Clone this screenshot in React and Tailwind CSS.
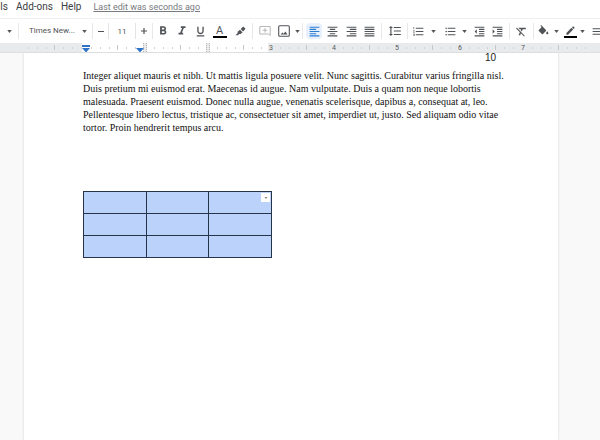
import React from "react";
import {
  MdFormatBold,
  MdFormatItalic,
  MdFormatUnderlined,
  MdFormatAlignLeft,
  MdFormatAlignCenter,
  MdFormatAlignRight,
  MdFormatAlignJustify,
  MdFormatLineSpacing,
  MdFormatListNumbered,
  MdFormatListBulleted,
  MdFormatIndentDecrease,
  MdFormatIndentIncrease,
  MdFormatClear,
  MdEdit,
  MdMenu,
} from "react-icons/md";

const UI = "font-['Roboto','Liberation_Sans',sans-serif]";

function Caret() {
  return (
    <svg viewBox="0 0 6 4" className="h-[3px] w-[5px] shrink-0" aria-hidden="true">
      <path d="M0 0h6L3 4z" fill="#555" />
    </svg>
  );
}

function Sep() {
  return <span className="h-4 w-px shrink-0 bg-[#e6e8ea]" />;
}

function Tool({ label, className, children }) {
  return (
    <button type="button" aria-label={label} className={"flex h-4 shrink-0 items-center justify-center " + className}>
      {children}
    </button>
  );
}

function Toolbar() {
  return (
    <div role="toolbar" aria-label="Formatting" className="flex h-[25px] items-center overflow-hidden border-t border-[#eceef0] bg-white text-[#505357]">
      <Tool label="Styles" className="w-[18px]"><Caret /></Tool>
      <Sep />
      <label className="flex w-[73px] shrink-0 items-center justify-between pl-[10px] pr-[5px]">
        <select aria-label="Font" className="w-[50px] appearance-none bg-transparent text-[8px] leading-4 text-[#505357] outline-none">
          <option>Times New...</option>
        </select>
        <Caret />
      </label>
      <Sep />
      <Tool label="Decrease font size" className="w-[15px]"><span className="h-px w-[6px] bg-[#505357]" /></Tool>
      <input aria-label="Font size" defaultValue="11" className="h-4 w-[28px] shrink-0 border-x border-[#e2e4e6] text-center text-[8px] text-[#505357] outline-none" />
      <Tool label="Increase font size" className="w-4">
        <svg viewBox="0 0 6 6" className="size-[6px]"><path d="M3 0v6M0 3h6" stroke="#505357" strokeWidth="1.2" /></svg>
      </Tool>
      <Sep />
      <Tool label="Bold" className="w-[20px]"><MdFormatBold className="size-[14px]" /></Tool>
      <Tool label="Italic" className="w-[18px]"><MdFormatItalic className="size-[14px]" /></Tool>
      <Tool label="Underline" className="w-[19px]"><MdFormatUnderlined className="size-[13px]" /></Tool>
      <Tool label="Text colour" className="w-[19px] flex-col">
        <span className="text-[11px] leading-[11px]">A</span>
        <span className="h-[2px] w-[14px] bg-black" />
      </Tool>
      <Tool label="Highlight colour" className="w-[23px]">
        <svg viewBox="0 0 12 12" className="size-[11px]">
          <path d="M6.2 3.2 9 .5l2.5 2.6L8.8 6zM5.4 4l2.8 2.8-2 1.9H4.5L3.2 10H.6L2.9 7.6 2.9 6.2z" fill="#505357" />
        </svg>
      </Tool>
      <Sep />
      <Tool label="Add comment" className="w-[23px]">
        <svg viewBox="0 0 12 12" className="size-[12px]" fill="none" stroke="#b4b6b8">
          <path d="M.8 1.5h10.4v9L9.500 9H.8zM6 3v4.600M3.700 5.300h4.600" />
        </svg>
      </Tool>
      <Tool label="Insert image" className="w-[26px] gap-[5px]">
        <svg viewBox="0 0 12 12" className="size-[12px]" fill="none" stroke="#505357" strokeWidth="1.1">
          <rect x=".7" y=".7" width="10.6" height="10.6" rx="1" />
          <path d="m2.6 9.400 1.8-2 1.2 1.3L7.400 6.500l2.100 2.900z" fill="#505357" stroke="none" />
        </svg>
        <Caret />
      </Tool>
      <Sep />
      <span className="w-[3px] shrink-0" />
      <Tool label="Align left" className="w-4 rounded-sm bg-[#e8f0fe] text-[#2b7cd3]"><MdFormatAlignLeft className="size-[13px]" /></Tool>
      <Tool label="Align centre" className="w-[20px]"><MdFormatAlignCenter className="size-[13px]" /></Tool>
      <Tool label="Align right" className="w-[18px]"><MdFormatAlignRight className="size-[13px]" /></Tool>
      <Tool label="Justify" className="w-[19px]"><MdFormatAlignJustify className="size-[13px]" /></Tool>
      <span className="w-[2px] shrink-0" />
      <Sep />
      <Tool label="Line spacing" className="w-[25px]"><MdFormatLineSpacing className="size-[14px]" /></Tool>
      <Sep />
      <Tool label="Numbered list" className="w-[32px] gap-[6px]"><MdFormatListNumbered className="size-[13px]" /><Caret /></Tool>
      <Tool label="Bulleted list" className="w-[30px] gap-[5px]"><MdFormatListBulleted className="size-[13px]" /><Caret /></Tool>
      <Tool label="Decrease indent" className="w-[18px]"><MdFormatIndentDecrease className="size-[13px]" /></Tool>
      <Tool label="Increase indent" className="w-[18px]"><MdFormatIndentIncrease className="size-[13px]" /></Tool>
      <span className="w-[3px] shrink-0" />
      <Sep />
      <Tool label="Clear formatting" className="w-[23px]"><MdFormatClear className="size-[13px]" /></Tool>
      <Sep />
      <Tool label="Fill colour" className="w-[28px] gap-[4px]">
        <svg viewBox="0 0 24 22" className="h-[12px] w-[13px]" fill="currentColor" aria-hidden="true">
          <path d="M16.560 8.940 7.620 0 6.210 1.410l2.380 2.380-5.150 5.150a1.490 1.490 0 0 0 0 2.120l5.500 5.500c.29.29.68.44 1.060.44s.77-.15 1.060-.44l5.500-5.500c.59-.58.59-1.530 0-2.120zM19 11.500s-2 2.170-2 3.500c0 1.100.9 2 2 2s2-.9 2-2c0-1.330-2-3.500-2-3.500z" />
        </svg>
        <Caret />
      </Tool>
      <Tool label="Border colour" className="w-[24px] gap-[2px]">
        <span className="flex w-[14px] flex-col items-center">
          <MdEdit className="size-[11px]" />
          <span className="h-[2px] w-[13px] bg-black" />
        </span>
        <Caret />
      </Tool>
      <Tool label="Border width" className="w-[22px]"><MdMenu className="size-[13px]" /></Tool>
    </div>
  );
}

const inches = [-1, 0, 1, 2, 3, 4, 5, 6, 7];

function Marker() {
  return <path d="M0 3h8L4 7.500z" fill="#2f73c9" />;
}

function Ruler() {
  return (
    <div className="relative flex h-[10px] overflow-hidden border-b border-[#dcdee0] bg-[#e9eaeb] pl-[19px]">
      {inches.map((n) => (
        <div
          key={n}
          className={
            "relative flex h-full w-[63px] shrink-0 items-center justify-between " +
            (n >= 0 && n < 3 ? "bg-white" : "")
          }
        >
          {[0, 1, 2, 3, 4, 5, 6, 7].map((t) => (
            <span
              key={t}
              className={"w-px " + (t === 0 ? "h-0" : t === 4 ? "h-[5px] bg-[#c6c8ca]" : "h-[2px] bg-[#d0d2d4]")}
            />
          ))}
          {n >= 3 && (
            <span className={"absolute left-0 top-0 -translate-x-1/2 bg-[#e9eaeb] px-px text-[7px] leading-[10px] text-[#55585c] " + UI}>{n}</span>
          )}
          {(n === 1 || n === 2) && (
            <span className="absolute left-0 top-0 h-full w-[4px] -translate-x-1/2 border-x border-dotted border-[#b4b6b8] bg-[#e9eaeb]" />
          )}
        </div>
      ))}
      <svg viewBox="0 0 8 8" className="absolute left-[82px] top-[2px] size-[8px]" aria-hidden="true">
        <rect width="8" height="2" fill="#2f73c9" />
        <Marker />
      </svg>
      <svg viewBox="0 0 8 8" className="absolute left-[136px] top-[2px] size-[8px]" aria-hidden="true">
        <Marker />
      </svg>
    </div>
  );
}

const lines = [
  "Integer aliquet mauris et nibh. Ut mattis ligula posuere velit. Nunc sagittis. Curabitur varius fringilla nisl.",
  "Duis pretium mi euismod erat. Maecenas id augue. Nam vulputate. Duis a quam non neque lobortis",
  "malesuada. Praesent euismod. Donec nulla augue, venenatis scelerisque, dapibus a, consequat at, leo.",
  "Pellentesque libero lectus, tristique ac, consectetuer sit amet, imperdiet ut, justo. Sed aliquam odio vitae",
  "tortor. Proin hendrerit tempus arcu.",
];

export default function App() {
  return (
    <div className="flex min-h-screen flex-col overflow-hidden bg-[#f9f9f9]">
      <nav aria-label="Menu" className={"flex h-[18px] items-start gap-2 overflow-hidden bg-white text-[10px] leading-[14px] text-[#3c4043] " + UI}>
        <button type="button" className="w-2">ls</button>
        <button type="button">Add-ons</button>
        <button type="button">Help</button>
        <a href="#history" className="ml-1 text-[9px] text-[#777a7e] underline">Last edit was seconds ago</a>
      </nav>
      <div className={UI}>
        <Toolbar />
      </div>
      <Ruler />
      <main className="ml-6 mr-[42px] flex-1 bg-white pl-[59px] pr-[62px] shadow-[0_0_2px_rgba(0,0,0,0.18)]">
        <div className="h-4 text-right font-['Liberation_Sans',sans-serif] text-[10px] leading-[9px] text-[#222]">10</div>
        <p className="whitespace-nowrap font-['Liberation_Serif',serif] text-[10px] leading-[13px] text-[#111]">
          {lines.map((l) => (
            <span key={l} className="block">{l}</span>
          ))}
        </p>
        <table className="mt-[57px] w-[189px] table-fixed border-collapse">
          <tbody>
            {[0, 1, 2].map((r) => (
              <tr key={r} className="h-[22px]">
                {[0, 1, 2].map((c) => (
                  <td key={c} className="border border-[#26344a] bg-[#bbd3fb] p-0 align-top">
                    {r === 0 && c === 2 && (
                      <button type="button" aria-label="Cell options" className="ml-auto mr-px mt-px flex size-[9px] items-center justify-center bg-white">
                        <svg viewBox="0 0 6 4" className="h-[2px] w-[4px]"><path d="M0 0h6L3 4z" fill="#888" /></svg>
                      </button>
                    )}
                  </td>
                ))}
              </tr>
            ))}
          </tbody>
        </table>
      </main>
    </div>
  );
}
